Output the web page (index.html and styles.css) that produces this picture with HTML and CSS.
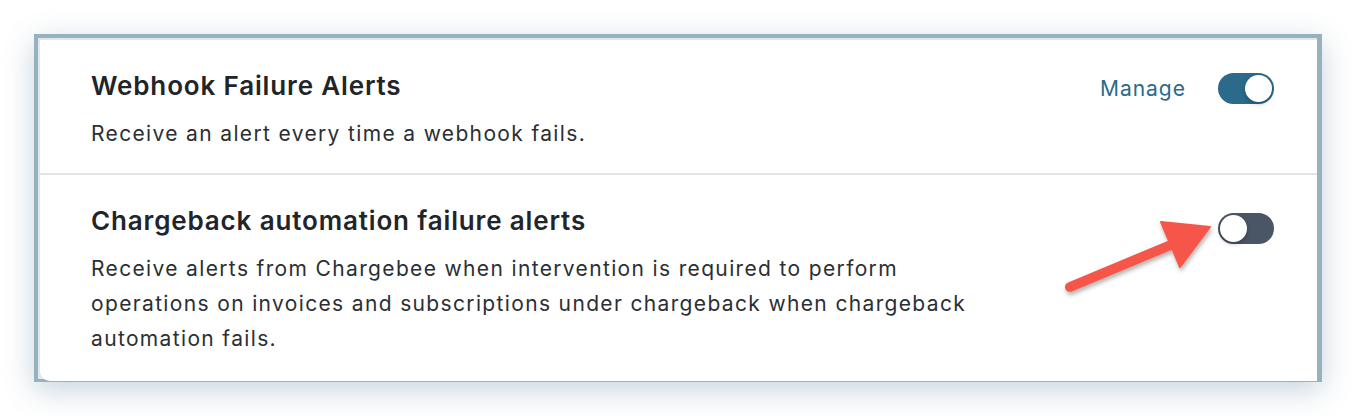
FILE: index.html
```html
<!DOCTYPE html>
<html lang="en">
<head>
  <meta charset="UTF-8">
  <title>Notification Settings</title>
  <link rel="stylesheet" href="styles.css">
</head>
<body>
  <!-- Framed settings card -->
  <div class="frame">
    <div class="card">
      <div class="row">
        <div class="text">
          <h3 class="title">Webhook Failure Alerts</h3>
          <p class="desc">Receive an alert every time a webhook fails.</p>
        </div>
        <div class="actions">
          <a class="manage" href="#">Manage</a>
          <span class="toggle on"><span class="knob"></span></span>
        </div>
      </div>
      <div class="row">
        <div class="text">
          <h3 class="title">Chargeback automation failure alerts</h3>
          <p class="desc">Receive alerts from Chargebee when intervention is required to perform operations on invoices and subscriptions under chargeback when chargeback automation fails.</p>
        </div>
        <div class="actions">
          <span class="toggle off"><span class="knob"></span></span>
        </div>
      </div>
    </div>

    <!-- Annotation arrow -->
    <svg class="arrow" width="180" height="100" viewBox="0 0 180 100">
      <defs>
        <filter id="shadow" x="-20%" y="-20%" width="140%" height="140%">
          <feDropShadow dx="1" dy="3" stdDeviation="2" flood-color="#000" flood-opacity="0.3"/>
        </filter>
      </defs>
      <g filter="url(#shadow)" fill="#f5574a" stroke="#f5574a">
        <line x1="12" y1="87" x2="120" y2="42" stroke-width="10" stroke-linecap="round"/>
        <polygon points="152,27 103,22 122,67" stroke-width="2" stroke-linejoin="round"/>
      </g>
    </svg>
  </div>
</body>
</html>
```

FILE: styles.css
```css
/* Page */
body {
  margin: 0;
  padding: 34px;
  background-color: #fff;
  font-family: Inter, "Noto Sans", sans-serif;
  color: #212529;
}

/* Outer frame round the screenshot */
.frame {
  position: relative;
  box-sizing: border-box;
  width: 1288px;
  height: 348px;
  border: 4px solid #96b1c0;
  border-right-width: 5px;
  border-bottom-width: 3px;
  background-color: #e6e6ea;
  box-shadow: 0 8px 28px rgba(70, 110, 140, 0.3);
}

.card {
  height: 100%;
  box-sizing: border-box;
  margin: 2px 0 0 2px;
  background-color: #fff;
  border-bottom-left-radius: 10px;
}

/* Rows */
.row {
  display: flex;
  justify-content: space-between;
  align-items: flex-start;
  padding: 29px 43px 0 51px;
  border-bottom: 2px solid #e3e3e8;
  height: 135px;
  box-sizing: border-box;
}

.row:last-child {
  border-bottom: none;
  height: auto;
}

.title {
  margin: 0;
  font-size: 26px;
  font-weight: 600;
  letter-spacing: 0.85px;
  line-height: 34px;
  color: #212529;
}

.desc {
  margin: 13px 0 0;
  max-width: 905px;
  font-size: 21px;
  letter-spacing: 1.35px;
  line-height: 35px;
  color: #2b2f34;
}

/* Actions */
.actions {
  display: flex;
  align-items: center;
  gap: 32px;
  padding-top: 4px;
}

.manage {
  color: #2b6a8a;
  font-size: 21px;
  letter-spacing: 1px;
  text-decoration: none;
}

.toggle {
  position: relative;
  display: block;
  width: 56px;
  height: 31px;
  border-radius: 16px;
  box-sizing: border-box;
}

.toggle.on {
  background-color: #2b6a8a;
}

.toggle.off {
  background-color: #4a5566;
  margin-top: 5px;
}

.toggle .knob {
  position: absolute;
  top: 2px;
  width: 27px;
  height: 27px;
  border-radius: 50%;
  background-color: #fff;
  box-shadow: 0 2px 4px rgba(0, 0, 0, 0.25);
}

.toggle.on .knob {
  right: 2px;
}

.toggle.off .knob {
  left: 2px;
}

/* Annotation */
.arrow {
  position: absolute;
  left: 1020px;
  top: 162px;
}
```
